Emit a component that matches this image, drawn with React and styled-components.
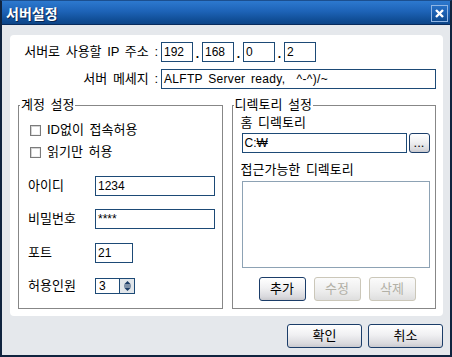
import React from "react";
import styled, { createGlobalStyle } from "styled-components";

const GlobalStyle = createGlobalStyle`
  html, body {
    margin: 0;
    padding: 0;
    background: #ffffff;
  }
  body {
    font-family: "Liberation Sans", "Noto Sans CJK KR", sans-serif;
    font-size: 12px;
    color: #000;
  }
  * {
    box-sizing: border-box;
  }
`;

const korean = `
  font-family: "Liberation Sans", "Noto Sans CJK KR", sans-serif;
  font-size: 13px;
  word-spacing: 2px;
`;

const Window = styled.div`
  width: 452px;
  height: 357px;
  display: flex;
  flex-direction: column;
  border: 2px solid #10243f;
  border-top: 1px solid #1b4f8f;
`;

const TitleBar = styled.div`
  height: 24px;
  flex: none;
  display: flex;
  align-items: center;
  justify-content: space-between;
  padding: 0 2px 0 4px;
  background: linear-gradient(#2d79cf 0%, #1d63b7 45%, #114f98 80%, #0d4587 100%);
  border-bottom: 1px solid #082b5c;
`;

const Title = styled.span`
  font-family: "Noto Sans CJK KR", sans-serif;
  font-size: 14px;
  font-weight: 700;
  line-height: 16px;
  color: #ffffff;
  text-shadow: 1px 1px 0 #0a2650;
`;

const CloseButton = styled.div`
  width: 17px;
  height: 17px;
  border: 1px solid #8fb5e4;
  display: flex;
  align-items: center;
  justify-content: center;
  margin-top: 1px;
`;

const Body = styled.div`
  flex: 1;
  display: flex;
  flex-direction: column;
  background: #e5e8ec;
  padding: 10px 7px 0 8px;
`;

const Panel = styled.div`
  height: 281px;
  background: #ffffff;
  border-radius: 4px;
`;

const TopForm = styled.div`
  display: grid;
  grid-template-columns: 148px 1fr;
  grid-auto-rows: 20px;
  column-gap: 3px;
  row-gap: 7px;
  padding-top: 7px;
  align-items: center;
`;

const FieldLabel = styled.span`
  ${korean}
  text-align: right;
  line-height: 16px;
`;

const IpRow = styled.div`
  display: flex;
  align-items: center;
`;

const Dot = styled.span`
  width: 9px;
  text-align: center;
  font-weight: 700;
  line-height: 12px;
  padding-top: 4px;
`;

const TextBox = styled.div`
  width: ${(p) => p.$w}px;
  height: ${(p) => p.$h || 20}px;
  flex: none;
  display: flex;
  align-items: center;
  padding-left: 2px;
  background: #ffffff;
  border: 1px solid #1d4a76;
  line-height: 14px;
  white-space: pre;
  overflow: hidden;
  word-spacing: ${(p) => p.$ws || 0}px;
  letter-spacing: ${(p) => p.$ls || 0}px;
`;

const Groups = styled.div`
  display: flex;
  gap: 9px;
  padding: 9px 7px 0 8px;
`;

const Group = styled.fieldset`
  width: ${(p) => p.$w}px;
  height: 211px;
  margin: 0;
  padding: 0;
  border: 1px solid #878787;
  min-inline-size: 0;
`;

const Legend = styled.legend`
  ${korean}
  line-height: 14px;
  padding: 0 1px;
  margin-left: 1px;
`;

const CheckRow = styled.label`
  ${korean}
  height: 22px;
  margin-top: ${(p) => p.$mt || 0}px;
  display: flex;
  align-items: center;
  gap: 6px;
  padding-left: 11px;
  line-height: 14px;
`;

const CheckBox = styled.span`
  width: 11px;
  height: 11px;
  border: 1px solid #7b7b7b;
  background: #ffffff;
  box-shadow: inset 1px 1px 0 #d4d4d4, inset -1px -1px 0 #f0f0f0;
`;

const FormRow = styled.div`
  height: ${(p) => p.$h || 20}px;
  margin-top: ${(p) => p.$mt}px;
  display: grid;
  grid-template-columns: 67px auto;
  align-items: center;
  padding-left: 9px;
`;

const RowLabel = styled.span`
  ${korean}
  line-height: 14px;
`;

const Spinner = styled.div`
  width: 40px;
  height: 16px;
  display: flex;
  align-items: center;
  justify-content: space-between;
  padding: 0 0 0 3px;
  border: 1px solid #1d4a76;
  background: #ffffff;
  line-height: 14px;
`;

const SpinBox = styled.div`
  width: 15px;
  height: 14px;
  border-left: 1px solid #1d4a76;
  background: #e2e6ea;
  display: flex;
  align-items: center;
  justify-content: center;
`;

const DirBody = styled.div`
  padding-left: 9px;
`;

const DirLabel = styled.div`
  ${korean}
  line-height: 16px;
  margin-top: ${(p) => p.$mt}px;
  margin-left: -1px;
`;

const PathRow = styled.div`
  display: flex;
  gap: 2px;
  margin-top: 2px;
`;

const ListBox = styled.div`
  width: 188px;
  height: 87px;
  margin-top: 3px;
  border: 1px solid #8da2b4;
  background: #ffffff;
`;

const ButtonRow = styled.div`
  display: flex;
  gap: 8px;
  margin-top: 9px;
  padding-left: 17px;
`;

const Button = styled.div`
  ${korean}
  width: ${(p) => p.$w}px;
  height: ${(p) => p.$h || 24}px;
  display: flex;
  align-items: center;
  justify-content: center;
  line-height: 14px;
  border-radius: 3px;
  border: 1px solid ${(p) => (p.$disabled ? "#cbc7b9" : "#1b3d69")};
  color: ${(p) => (p.$disabled ? "#b2b0a6" : "#000")};
  background: ${(p) =>
    p.$disabled
      ? "linear-gradient(#fbfbfb, #ededed 60%, #dedede)"
      : "linear-gradient(#ffffff, #f0f0f2 45%, #d9d9dd 85%, #c9c9ce)"};
`;

const Footer = styled.div`
  display: flex;
  justify-content: flex-end;
  gap: 6px;
  margin-top: 8px;
`;

const CloseIcon = () => (
  <svg width="9" height="9" viewBox="0 0 9 9">
    <path d="M1 1L8 8M8 1L1 8" stroke="#ffffff" strokeWidth="2.4" />
  </svg>
);

const SpinIcon = () => (
  <svg width="9" height="12" viewBox="0 0 9 12">
    <path d="M4.5 1L8 4.5H1Z" fill="#1d3d66" />
    <path d="M1 6H8" stroke="#1d3d66" strokeWidth="1" />
    <path d="M1 7.5H8L4.5 11Z" fill="#1d3d66" />
  </svg>
);

const App = () => {
  return (
    <>
      <GlobalStyle />
      <Window>
        <TitleBar>
          <Title>서버설정</Title>
          <CloseButton>
            <CloseIcon />
          </CloseButton>
        </TitleBar>
        <Body>
          <Panel>
            <TopForm>
              <FieldLabel>서버로 사용할 IP 주소 :</FieldLabel>
              <IpRow>
                <TextBox $w={32}>192</TextBox>
                <Dot>.</Dot>
                <TextBox $w={32}>168</TextBox>
                <Dot>.</Dot>
                <TextBox $w={32}>0</TextBox>
                <Dot>.</Dot>
                <TextBox $w={32}>2</TextBox>
              </IpRow>
              <FieldLabel>서버 메세지 :</FieldLabel>
              <TextBox $w={275} $ws={2} $ls={0.3}>ALFTP Server ready,  ^-^)/~</TextBox>
            </TopForm>
            <Groups>
              <Group $w={205}>
                <Legend>계정 설정</Legend>
                <CheckRow $mt={7}>
                  <CheckBox />
                  ID없이 접속허용
                </CheckRow>
                <CheckRow>
                  <CheckBox />
                  읽기만 허용
                </CheckRow>
                <FormRow $mt={13}>
                  <RowLabel>아이디</RowLabel>
                  <TextBox $w={120}>1234</TextBox>
                </FormRow>
                <FormRow $mt={13}>
                  <RowLabel>비밀번호</RowLabel>
                  <TextBox $w={120}>****</TextBox>
                </FormRow>
                <FormRow $mt={14}>
                  <RowLabel>포트</RowLabel>
                  <TextBox $w={38}>21</TextBox>
                </FormRow>
                <FormRow $mt={15} $h={16}>
                  <RowLabel>허용인원</RowLabel>
                  <Spinner>
                    3
                    <SpinBox>
                      <SpinIcon />
                    </SpinBox>
                  </Spinner>
                </FormRow>
              </Group>
              <Group $w={205}>
                <Legend>디렉토리 설정</Legend>
                <DirBody>
                  <DirLabel $mt={3}>홈 디렉토리</DirLabel>
                  <PathRow>
                    <TextBox $w={165}>C:₩</TextBox>
                    <Button $w={21} $h={20}>...</Button>
                  </PathRow>
                  <DirLabel $mt={9}>접근가능한 디렉토리</DirLabel>
                  <ListBox />
                  <ButtonRow>
                    <Button $w={47}>추가</Button>
                    <Button $w={47} $disabled>수정</Button>
                    <Button $w={47} $disabled>삭제</Button>
                  </ButtonRow>
                </DirBody>
              </Group>
            </Groups>
          </Panel>
          <Footer>
            <Button $w={75}>확인</Button>
            <Button $w={75}>취소</Button>
          </Footer>
        </Body>
      </Window>
    </>
  );
};

export default App;
